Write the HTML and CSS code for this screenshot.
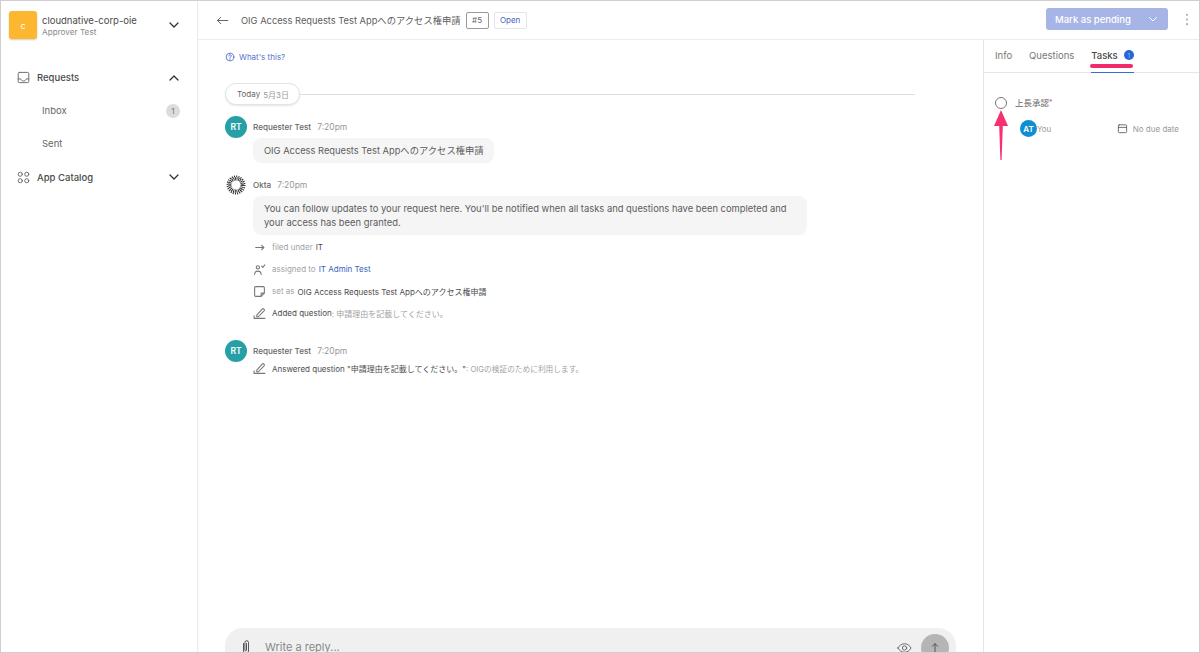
FILE: index.html
```html
<!DOCTYPE html>
<html lang="en">
<head>
<meta charset="utf-8">
<title>OIG Access Requests</title>
<link rel="stylesheet" href="styles.css">
</head>
<body>
<div class="app">
  <aside class="sidebar">
    <div class="org">
      <div class="org-logo">c</div>
      <div class="org-text">
        <div class="org-name">cloudnative-corp-oie</div>
        <div class="org-role">Approver Test</div>
      </div>
      <svg class="chev" viewBox="0 0 12 12"><path d="M2 4l4 4 4-4"/></svg>
    </div>
    <nav class="nav">
      <div class="nav-row">
        <svg class="nav-icon" viewBox="0 0 14 14"><path d="M2.500 1.500h9a1.200 1.200 0 0 1 1.200 1.200v8.600a1.200 1.200 0 0 1-1.200 1.200h-9a1.200 1.200 0 0 1-1.200-1.200V2.700a1.200 1.200 0 0 1 1.200-1.200z"/><path d="M1.300 8.500h2.700c.5 1.600 1.500 2.200 3 2.200s2.500-.6 3-2.200h2.700"/></svg>
        <span class="nav-label">Requests</span>
        <svg class="chev" viewBox="0 0 12 12"><path d="M2 8l4-4 4 4"/></svg>
      </div>
      <div class="nav-sub"><span>Inbox</span><span class="count">1</span></div>
      <div class="nav-sub"><span>Sent</span></div>
      <div class="nav-row">
        <svg class="nav-icon" viewBox="0 0 14 14"><circle cx="3.500" cy="3.500" r="2.200"/><circle cx="10.500" cy="3.500" r="2.200"/><circle cx="3.500" cy="10.500" r="2.200"/><circle cx="10.500" cy="10.500" r="2.200"/></svg>
        <span class="nav-label">App Catalog</span>
        <svg class="chev" viewBox="0 0 12 12"><path d="M2 4l4 4 4-4"/></svg>
      </div>
    </nav>
  </aside>

  <div class="workspace">
    <header class="topbar">
      <svg class="back" viewBox="0 0 14 10"><path d="M13 5H1.500M5 1.500L1.500 5 5 8.500"/></svg>
      <span class="title">OIG Access Requests Test Appへのアクセス権申請</span>
      <span class="tag-num">#5</span>
      <span class="tag-open">Open</span>
      <div class="top-actions">
        <div class="pending">
          <span>Mark as pending</span>
          <svg viewBox="0 0 12 12"><path d="M2.500 4.500L6 8l3.500-3.500"/></svg>
        </div>
        <svg class="dots" viewBox="0 0 4 14"><circle cx="2" cy="2" r="1.100"/><circle cx="2" cy="7" r="1.100"/><circle cx="2" cy="12" r="1.100"/></svg>
      </div>
    </header>

    <div class="panes">
      <main class="thread">
        <a class="whats">
          <svg viewBox="0 0 12 12"><circle cx="6" cy="6" r="4.600"/><path d="M4.500 4.800c0-2 3-2 3-.2 0 1.200-1.500 1.100-1.500 2.400"/><path d="M6 8.200v.5"/></svg>
          What's this?
        </a>
        <div class="day">
          <span class="day-pill">Today <em>5月3日</em></span>
          <span class="day-line"></span>
        </div>

        <section class="msg">
          <div class="msg-head">
            <span class="avatar">RT</span>
            <span class="author">Requester Test</span>
            <span class="time">7:20pm</span>
          </div>
          <div class="bubble">OIG Access Requests Test Appへのアクセス権申請</div>
        </section>

        <section class="msg msg-okta">
          <div class="msg-head">
            <svg class="okta" viewBox="0 0 20 20"><circle class="okta-inner" cx="10" cy="10" r="6.200" stroke-dasharray=".9 .72"/><circle class="okta-outer" cx="10" cy="10" r="8.600" stroke-dasharray="1 1.250"/></svg>
            <span class="author">Okta</span>
            <span class="time">7:20pm</span>
          </div>
          <div class="bubble bubble-wide">You can follow updates to your request here. You'll be notified when all tasks and questions have been completed and your access has been granted.</div>
          <ul class="events">
            <li>
              <svg viewBox="0 0 12 12"><path d="M2.500 6h7.500M8 4l2 2-2 2"/></svg>
              <span class="mute">filed under</span> <span class="strong">IT</span>
            </li>
            <li>
              <svg viewBox="0 0 12 12"><circle cx="4.500" cy="4" r="1.500"/><path d="M1.500 10.500c0-2 1-3 3-3s3 1 3 3M8 3l1 1 2-2.300"/></svg>
              <span class="mute">assigned to</span> <span class="link">IT Admin Test</span>
            </li>
            <li>
              <svg viewBox="0 0 12 12"><path d="M1.500 2.500a1 1 0 0 1 1-1h7a1 1 0 0 1 1 1v5l-3 3h-5a1 1 0 0 1-1-1zM7.500 10.500v-3h3"/></svg>
              <span class="mute">set as</span> <span class="strong">OIG Access Requests Test Appへのアクセス権申請</span>
            </li>
            <li>
              <svg viewBox="0 0 12 12"><path d="M3.500 7.500l5-5.500a1.100 1.100 0 0 1 1.700 1.500L5 9H3.500zM1 10.500h10M1 10.500V8"/></svg>
              <span class="strong">Added question</span><span class="mute">: 申請理由を記載してください。</span>
            </li>
          </ul>
        </section>

        <section class="msg msg-answer">
          <div class="msg-head">
            <span class="avatar">RT</span>
            <span class="author">Requester Test</span>
            <span class="time">7:20pm</span>
          </div>
          <ul class="events events-tight">
            <li>
              <svg viewBox="0 0 12 12"><path d="M3.500 7.500l5-5.500a1.100 1.100 0 0 1 1.700 1.500L5 9H3.500zM1 10.500h10M1 10.500V8"/></svg>
              <span class="strong">Answered question "申請理由を記載してください。"</span><span class="mute answer-text">: OIGの検証のために利用します。</span>
            </li>
          </ul>
        </section>

        <div class="composer">
          <svg class="clip" viewBox="0 0 12 16"><path d="M3.500 4.500v7.500a2.500 2.500 0 0 0 5 0V3.500a1.800 1.800 0 0 0-3.600 0V11a.8.8 0 0 0 1.600 0V4.500"/></svg>
          <span class="placeholder">Write a reply...</span>
          <svg class="eye" viewBox="0 0 16 12"><path d="M1 6c1.800-3 4-4.500 7-4.500S13.200 3 15 6c-1.800 3-4 4.500-7 4.500S2.800 9 1 6z"/><circle cx="8" cy="6" r="2.300"/></svg>
          <span class="send"><svg viewBox="0 0 12 14"><path d="M6 13V2M2.800 5L6 1.800 9.200 5"/></svg></span>
        </div>
      </main>

      <aside class="side">
        <div class="tabs">
          <span class="tab">Info</span>
          <span class="tab">Questions</span>
          <span class="tab tab-active">Tasks <span class="tab-badge">1</span></span>
        </div>
        <div class="task">
          <span class="task-check"></span>
          <span class="task-name">上長承認<b>*</b></span>
        </div>
        <div class="task-meta">
          <span class="avatar avatar-sm">AT</span>
          <span class="you">You</span>
          <span class="due">
            <svg viewBox="0 0 12 12"><rect x="1.500" y="2" width="9" height="8.500" rx="1"/><path d="M1.500 4.800h9"/></svg>
            No due date
          </span>
        </div>
      </aside>
    </div>
  </div>

  <span class="mark-underline"></span>
  <svg class="mark-arrow" viewBox="0 0 16 50"><path d="M8 0L15 16H9.800L8.600 50H7.400L6.200 16H1z"/></svg>
</div>
</body>
</html>
```

FILE: styles.css
```css
* { box-sizing: border-box; }
html, body { margin: 0; height: 100%; overflow: hidden; }
body { font-family: "Inter", "Noto Sans CJK JP", sans-serif; color: #4d4d4d; background: #fff; font-size: 9px; }
svg { fill: none; stroke: currentColor; stroke-width: 1; stroke-linecap: round; stroke-linejoin: round; }

.app { position: relative; display: flex; width: 1200px; height: 653px; border: 1px solid #cfcfcf; overflow: hidden; }

.sidebar { width: 197px; flex: none; border-right: 1px solid #ececec; box-shadow: 1px 0 2px rgba(0,0,0,.02); }
.org { display: flex; align-items: center; padding: 10px 17px 0 8px; height: 38px; }
.org-logo { width: 28px; height: 28px; border-radius: 3px; background: #fdb62f; color: #fff; font-size: 9px; display: flex; align-items: center; justify-content: center; box-shadow: 0 1px 2px rgba(0,0,0,.2); margin-right: 5px; }
.org-text { flex: 1; padding-top: 2px; }
.org-name { font-size: 9.500px; color: #4a4a4a; line-height: 13px; }
.org-role { font-size: 8.200px; color: #8a8a8a; line-height: 11px; }
.chev { width: 12px; height: 12px; flex: none; color: #333; stroke-width: 1.300; }

.nav { padding: 22px 17px 0 16px; }
.nav-row { display: flex; align-items: center; height: 33px; }
.nav-row:last-child { height: 34px; }
.nav-icon { width: 13px; height: 13px; color: #666; margin-right: 7px; flex: none; }
.nav-label { flex: 1; font-size: 9.500px; color: #4a4a4a; font-weight: 500; }
.nav-sub { display: flex; align-items: center; justify-content: space-between; height: 33px; padding-left: 25px; font-size: 9.500px; color: #666; }
.count { width: 14px; height: 14px; border-radius: 50%; background: #dcdcdc; font-size: 8px; color: #777; display: flex; align-items: center; justify-content: center; }

.workspace { flex: 1; min-width: 0; display: flex; flex-direction: column; }
.topbar { height: 39px; flex: none; border-bottom: 1px solid #ececec; display: flex; align-items: center; padding: 0 10px 0 18px; }
.back { width: 13px; height: 9px; color: #555; margin-right: 12px; }
.title { font-size: 9.300px; color: #5c5c5c; margin-right: 5px; }
.tag-num { height: 17px; width: 23px; border: 1px solid #999; border-radius: 2px; font-size: 8px; color: #666; display: flex; align-items: center; justify-content: center; margin-right: 5px; }
.tag-open { height: 17px; width: 33px; border: 1px solid #e1e6f0; border-radius: 2px; font-size: 8px; color: #3f66bf; display: flex; align-items: center; justify-content: center; }
.top-actions { margin-left: auto; margin-bottom: 2px; display: flex; align-items: center; }
.pending { width: 122px; height: 22px; border-radius: 3px; background: #a7b4e6; color: #fff; font-size: 9.500px; font-weight: 500; display: flex; align-items: center; justify-content: space-between; padding: 0 9px; }
.pending svg { width: 12px; height: 12px; }
.dots { width: 4px; height: 13px; margin-left: 17px; fill: #aaa; stroke: none; }

.panes { flex: 1; min-height: 0; display: flex; }
.thread { flex: 1; min-width: 0; position: relative; padding: 12px 28px 0 27px; border-right: 1px solid #e6e6e6; }

.whats { display: flex; align-items: center; gap: 4px; font-size: 8px; color: #5674c9; height: 10px; }
.whats svg { width: 10px; height: 10px; stroke: #3a63c2; }

.day { display: flex; align-items: center; margin-top: 21px; margin-right: 40px; }
.day-pill { width: 75px; height: 22px; border: 1px solid #e4e4e4; border-radius: 11px; box-shadow: 0 1px 2px rgba(0,0,0,.1); font-size: 8px; color: #666; display: flex; align-items: center; justify-content: center; gap: 3px; background: #fff; padding-left: 1px; }
.day-pill em { font-style: normal; color: #999; }
.day-line { flex: 1; height: 1px; background: #dedede; }

.msg { margin-top: 11px; }
.msg-okta { margin-top: 11px; }
.msg-answer { margin-top: 16px; }
.msg-head { display: flex; align-items: center; height: 22px; }
.avatar { width: 22px; height: 22px; border-radius: 50%; background: #26a0a6; color: #fff; font-size: 8.500px; font-weight: 600; display: flex; align-items: center; justify-content: center; flex: none; }
.okta { width: 20px; height: 20px; margin: 0 1px; color: #222; stroke-linecap: butt; }
.okta-inner { stroke-width: 3.200; }
.okta-outer { stroke-width: 2; stroke-width: 1.800; }
.author { margin-left: 6px; font-size: 8.100px; font-weight: 500; color: #666; }
.time { margin-left: 6px; font-size: 8.500px; color: #999; }
.bubble { display: table; margin-left: 28px; padding: 7px 10px 7px 11px; border-radius: 8px; background: #f5f5f5; font-size: 9.300px; line-height: 11px; color: #5c5c5c; }
.bubble-wide { display: block; width: 554px; font-size: 9.400px; line-height: 14px; padding: 6px 11px 5px; }

.events { list-style: none; margin: 1px 0 0 28px; padding: 0; }
.events li { display: flex; align-items: center; height: 22px; font-size: 8px; color: #555; white-space: pre; }
.events svg { width: 13px; height: 13px; color: #777; margin-right: 6px; flex: none; }
.events li .mute + .strong, .events li .mute + .link { margin-left: 3px; }
.events-tight { margin-top: -5px; }
.mute { color: #a3a3a3; }
.answer-text { font-size: 7.700px; }
.strong { color: #4d4d4d; }
.link { color: #3a63c2; }

.composer { position: absolute; left: 27px; right: 27px; top: 588px; height: 50px; border-radius: 18px 18px 0 0; background: #f0f0f0; display: flex; align-items: flex-start; padding: 10px 7px 0 15px; }
.clip { width: 12px; height: 16px; color: #555; margin-top: 1px; }
.placeholder { margin-left: 13px; font-size: 11px; color: #888; flex: 1; line-height: 18px; }
.eye { width: 15px; height: 12px; color: #666; margin-top: 4px; margin-right: 9px; }
.send { width: 28px; height: 28px; margin-top: -4px; border-radius: 50%; background: #b5b5b5; display: flex; align-items: center; justify-content: center; }
.send svg { width: 10px; height: 12px; color: #555; stroke-width: 1.200; }

.side { width: 215px; flex: none; }
.tabs { height: 33px; border-bottom: 1px solid #e6e6e6; display: flex; align-items: center; padding: 0 11px; gap: 17px; }
.tab { font-size: 9.500px; color: #777; height: 33px; display: flex; align-items: center; position: relative; padding-bottom: 1px; }
.tab-active { color: #4a4a4a; font-weight: 500; gap: 6px; border-bottom: 1px solid #2e6fd8; }
.tab-badge { width: 10px; height: 10px; border-radius: 50%; background: #2867d6; color: #8fb0ea; font-size: 6px; display: flex; align-items: center; justify-content: center; }

.task { display: flex; align-items: center; padding: 21px 0 0 11px; height: 39px; }
.task-check { width: 12px; height: 12px; border: 1.500px solid #777; border-radius: 50%; margin-right: 8px; }
.task-name { font-size: 8.500px; color: #666; margin-top: -2px; }
.task-name b { color: #e0557a; font-weight: 400; font-size: 7px; vertical-align: 1px; }
.task-meta { display: flex; align-items: center; padding: 8px 20px 0 36px; }
.avatar-sm { width: 17px; height: 17px; background: #0f8fd1; font-size: 8px; }
.you { font-size: 8px; color: #999; }
.due { margin-left: auto; display: flex; align-items: center; gap: 5px; font-size: 8px; color: #999; }
.due svg { width: 11px; height: 11px; color: #666; }

.mark-underline { position: absolute; left: 1089px; top: 63px; width: 43px; height: 4px; border-radius: 2px; background: #f02a6b; }
.mark-arrow { position: absolute; left: 992px; top: 109px; width: 16px; height: 50px; fill: #f7306f; stroke: none; }
```
